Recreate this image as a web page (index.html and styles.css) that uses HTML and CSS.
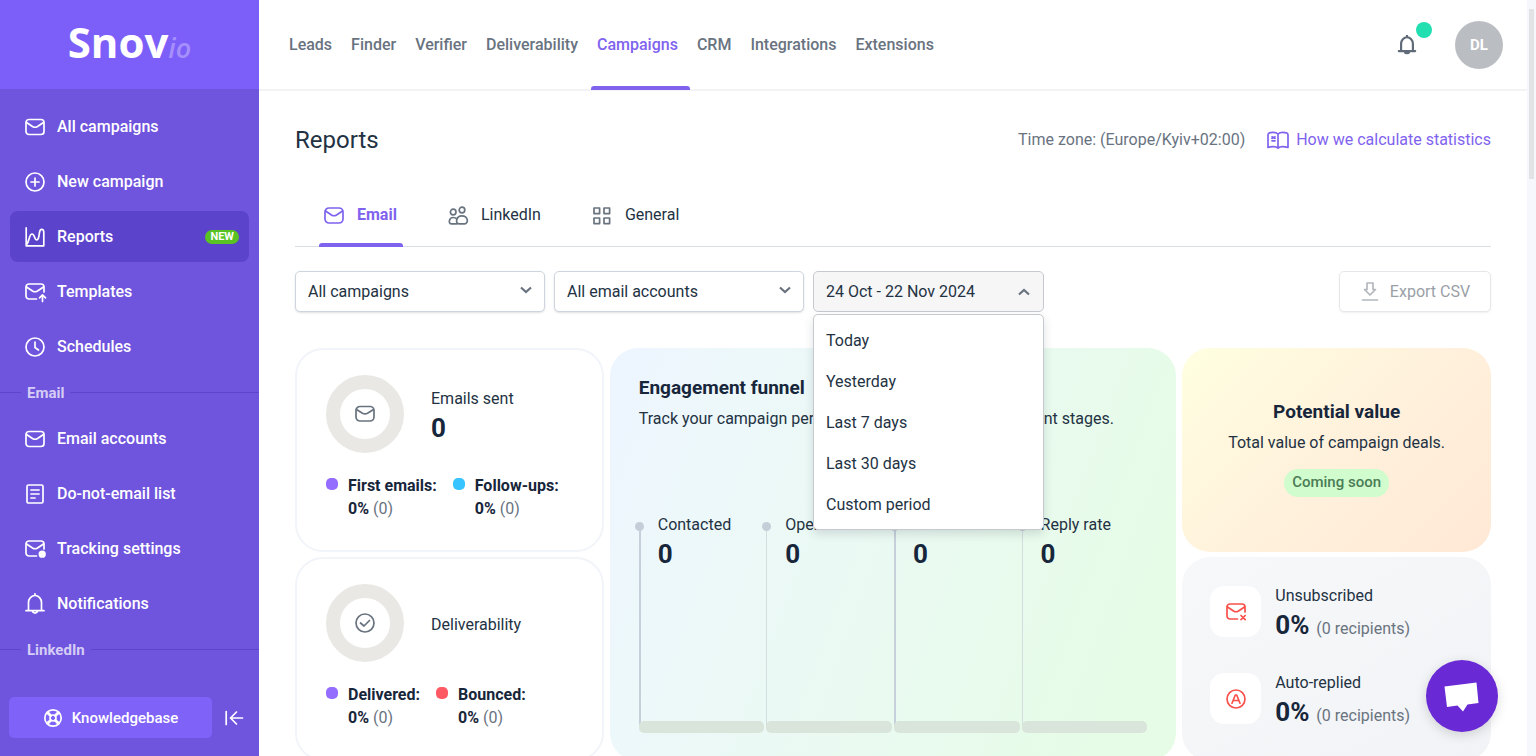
FILE: index.html
```
<!DOCTYPE html>
<html lang="en">
  <head>
    <meta charset="UTF-8" />
    <meta name="viewport" content="width=device-width, initial-scale=1.0" />
    <title>Reports</title>
    <link rel="stylesheet" href="styles.css">
  </head>
  <body>
    <!-- Shared icons -->
    <svg class="icon-defs" aria-hidden="true">
      <symbol id="icon-mail" viewBox="0 0 20 20">
        <rect x="1" y="2.5" width="18" height="15" rx="3" />
        <path d="M1.5 5.5 L7.5 9.5 Q10 11 12.5 9.5 L18.5 5.5" />
      </symbol>
      <symbol id="icon-mail-cut" viewBox="0 0 20 20">
        <path d="M11.5 17 H4 A3 3 0 0 1 1 14 V5 A3 3 0 0 1 4 2 H16 A3 3 0 0 1 19 5 V10" />
        <path d="M1.5 5 L7.5 9 Q10 10.5 12.5 9 L18.5 5" />
      </symbol>
      <symbol id="icon-bell" viewBox="0 0 20 22">
        <path d="M3.5 17.5 V9.5 A6.5 7 0 0 1 16.5 9.5 V17.5 M1 17.7 H19 M7.3 18 A2.8 2.8 0 0 0 12.7 18 M10 0.8 V2.5" />
      </symbol>
    </svg>

    <div class="app">
      <aside class="sidebar">
        <a class="logo" href="#">Snov<span>io</span></a>

        <nav class="side-nav">
          <ul>
            <li><a href="#"><svg class="icon"><use href="#icon-mail" /></svg>All campaigns</a></li>
            <li><a href="#"><svg class="icon" viewBox="0 0 20 20"><circle cx="10" cy="10" r="9" /><path d="M10 6 V14 M6 10 H14" /></svg>New campaign</a></li>
            <li>
              <a class="active" href="#"><svg class="icon" viewBox="0 0 20 20"><path d="M1.2 0.8 V18.8 H18.8 V5.5 C18.8 1.2 15 1.2 14.5 5.5 C13.8 11 13.3 13 11.5 13 C9.5 13 9.8 7 7 7 C4 7 4.5 15 1.4 17.8" /></svg>Reports <span class="badge-new">NEW</span></a>
            </li>
            <li><a href="#"><svg class="icon" viewBox="0 0 20 20"><use href="#icon-mail-cut" /><path d="M17.5 19.5 V13 M14.5 15.8 L17.5 12.8 L20.5 15.8" /></svg>Templates</a></li>
            <li><a href="#"><svg class="icon" viewBox="0 0 20 20"><circle cx="10" cy="10" r="9" /><path d="M10 5 V10.5 L13.5 13" /></svg>Schedules</a></li>
          </ul>
          <h2 class="side-label">Email</h2>
          <ul>
            <li><a href="#"><svg class="icon"><use href="#icon-mail" /></svg>Email accounts</a></li>
            <li><a href="#"><svg class="icon" viewBox="0 0 20 20"><rect x="2" y="1" width="16" height="18" rx="1.5" /><path d="M6 6 H14 M6 10 H14 M6 14 H10" /></svg>Do-not-email list</a></li>
            <li><a href="#"><svg class="icon" viewBox="0 0 20 20"><use href="#icon-mail-cut" /><circle class="solid" cx="17.2" cy="15.2" r="2.8" /></svg>Tracking settings</a></li>
            <li><a href="#"><svg class="icon icon-tall"><use href="#icon-bell" /></svg>Notifications</a></li>
          </ul>
          <h2 class="side-label">LinkedIn</h2>
        </nav>

        <div class="side-footer">
          <a class="knowledge" href="#">
            <svg class="icon" viewBox="0 0 20 20"><circle cx="10" cy="10" r="8.2" /><circle cx="10" cy="10" r="3" /><path d="M4 5 L7.8 8.3 M5 4 L8.3 7.5 M16 5 L12.2 8.3 M15 4 L11.7 7.5 M4 15 L7.8 11.7 M5 16 L8.3 12.5 M16 15 L12.2 11.7 M15 16 L11.7 12.5" /></svg>
            Knowledgebase
          </a>
          <button class="collapse" aria-label="Collapse menu">
            <svg class="icon" viewBox="0 0 20 20"><path d="M2.2 3.5 V16.5 M18.5 10 H6.5 M12.5 4 L6.5 10 L12.5 16" /></svg>
          </button>
        </div>
      </aside>

      <div class="main">
        <header class="topbar">
          <nav class="top-nav">
            <a href="#">Leads</a>
            <a href="#">Finder</a>
            <a href="#">Verifier</a>
            <a href="#">Deliverability</a>
            <a class="active" href="#">Campaigns</a>
            <a href="#">CRM</a>
            <a href="#">Integrations</a>
            <a href="#">Extensions</a>
          </nav>
          <div class="top-tools">
            <button class="bell" aria-label="Notifications">
              <svg class="icon"><use href="#icon-bell" /></svg>
              <span class="bell-dot"></span>
            </button>
            <button class="avatar">DL</button>
          </div>
        </header>

        <main class="content">
          <div class="page-head">
            <h1>Reports</h1>
            <p>Time zone: (Europe/Kyiv+02:00)</p>
            <a href="#">
              <svg class="icon" viewBox="0 0 20 20"><path d="M10 4 C8 2 5 2 1.5 2.8 Q0 3.2 0 5 V17.5 C4 16.3 8 16.3 10 18 C12 16.3 16 16.3 20 17.5 V5 Q20 3.2 18.5 2.8 C15 2 12 2 10 4 V18 M4 6.8 L7 8.4 M7 6.8 L4 8.4 M4 10.8 H7" /></svg>
              How we calculate statistics
            </a>
          </div>

          <nav class="tabs">
            <a class="active" href="#"><svg class="icon" viewBox="0 0 20 20"><rect x="1" y="3" width="18" height="15" rx="4" /><path d="M1.5 6 L7.5 10 Q10 11.5 12.5 10 L18.5 6" /></svg>Email</a>
            <a href="#"><svg class="icon" viewBox="0 0 20 20"><circle cx="5.2" cy="7" r="2.8" /><circle cx="14" cy="5" r="2.8" /><path d="M9 18.8 H3 C0.5 18.8 0.5 12.5 5.3 12.5 Q7.5 12.5 8.8 14 M11 18.8 C7 18.8 8 10.8 13.8 10.8 C20.5 10.8 20.8 18.8 16.5 18.8 Z" /></svg>LinkedIn</a>
            <a href="#"><svg class="icon" viewBox="0 0 20 20"><rect x="2" y="3" width="5.6" height="5.6" /><rect x="12" y="3" width="5.6" height="5.6" /><rect x="2" y="13" width="5.6" height="5.6" /><rect x="12" y="13" width="5.6" height="5.6" /></svg>General</a>
          </nav>

          <div class="filters">
            <div class="select-box">
              <select aria-label="Campaigns">
                <option>All campaigns</option>
              </select>
              <svg class="chevron" viewBox="0 0 12 8"><path d="M1 1.5 L6 6 L11 1.5" /></svg>
            </div>
            <div class="select-box">
              <select aria-label="Email accounts">
                <option>All email accounts</option>
              </select>
              <svg class="chevron" viewBox="0 0 12 8"><path d="M1 1.5 L6 6 L11 1.5" /></svg>
            </div>
            <div class="period">
              <button class="period-toggle" aria-expanded="true">
                24 Oct - 22 Nov 2024
                <svg class="chevron" viewBox="0 0 12 8"><path d="M1 6.5 L6 2 L11 6.5" /></svg>
              </button>
              <div class="period-menu">
                <button>Today</button>
                <button>Yesterday</button>
                <button>Last 7 days</button>
                <button>Last 30 days</button>
                <button>Custom period</button>
              </div>
            </div>
            <button class="export" disabled>
              <svg class="icon" viewBox="0 0 20 20"><path d="M7 1 H13 V7.5 H15.5 L10 13 L4.5 7.5 H7 Z M2.5 18 H17.5" /></svg>
              Export CSV
            </button>
          </div>

          <div class="cards">
            <section class="card metric">
              <div class="metric-top">
                <div class="ring"><svg class="icon" viewBox="0 0 20 20"><rect x="1" y="2.5" width="18" height="14.5" rx="4" /><path d="M1.5 5.5 L7.5 9.2 Q10 10.5 12.5 9.2 L18.5 5.5" /></svg></div>
                <div>
                  <h3>Emails sent</h3>
                  <p class="value">0</p>
                </div>
              </div>
              <ul class="legend">
                <li class="violet"><b>First emails:</b><br><b>0%</b> (0)</li>
                <li class="blue"><b>Follow-ups:</b><br><b>0%</b> (0)</li>
              </ul>
            </section>

            <section class="card funnel">
              <h2>Engagement funnel</h2>
              <p>Track your campaign performance at different engagement stages.</p>
              <div class="stages">
                <div class="stage"><h3>Contacted</h3><p class="value">0</p></div>
                <div class="stage"><h3>Open rate</h3><p class="value">0</p></div>
                <div class="stage"><h3>Click rate</h3><p class="value">0</p></div>
                <div class="stage"><h3>Reply rate</h3><p class="value">0</p></div>
              </div>
            </section>

            <section class="card potential">
              <h2>Potential value</h2>
              <p>Total value of campaign deals.</p>
              <span class="soon">Coming soon</span>
            </section>

            <section class="card metric">
              <div class="metric-top">
                <div class="ring"><svg class="icon" viewBox="0 0 20 20"><circle cx="10" cy="10" r="9" /><path d="M5.5 10 L9 13 L14.5 7.5" /></svg></div>
                <h3>Deliverability</h3>
              </div>
              <ul class="legend">
                <li class="violet"><b>Delivered:</b><br><b>0%</b> (0)</li>
                <li class="red"><b>Bounced:</b><br><b>0%</b> (0)</li>
              </ul>
            </section>

            <section class="card replies">
              <div class="reply">
                <div class="tile"><svg class="icon" viewBox="0 0 20 20"><use href="#icon-mail-cut" /><path d="M15 13.5 L19.2 17.7 M19.2 13.5 L15 17.7" /></svg></div>
                <div>
                  <h3>Unsubscribed</h3>
                  <p><span class="value">0%</span> (0 recipients)</p>
                </div>
              </div>
              <div class="reply">
                <div class="tile"><svg class="icon" viewBox="0 0 20 20"><circle cx="10" cy="10" r="9" /><path d="M6 14.2 L9.3 6 H10.7 L14 14.2 M7.3 11.5 H12.7" /></svg></div>
                <div>
                  <h3>Auto-replied</h3>
                  <p><span class="value">0%</span> (0 recipients)</p>
                </div>
              </div>
            </section>
          </div>
        </main>
      </div>

      <div class="scroll-track"><div class="scroll-thumb"></div></div>
    </div>

    <button class="chat" aria-label="Open chat">
      <svg viewBox="0 0 72 72"><path d="M18.5 26.5 L50.5 22.5 L52.5 43 L41.5 44.5 L37 51.5 L31.5 45.5 L21 47 Z" /></svg>
    </button>
  </body>
</html>
```
FILE: styles.css
```
* {
  box-sizing: border-box;
}
body {
  margin: 0;
  font-family: Roboto, sans-serif;
  font-size: 16px;
  line-height: 24px;
  color: #233243;
  overflow: hidden;
}
h1,
h2,
h3,
p,
ul {
  margin: 0;
  padding: 0;
  font-weight: 400;
  font-size: 16px;
}
ul {
  list-style: none;
}
a {
  color: inherit;
  text-decoration: none;
}
button,
select {
  font: inherit;
  color: inherit;
  border: none;
  background: none;
  padding: 0;
  cursor: pointer;
}

.icon-defs {
  display: none;
}
.icon {
  width: 20px;
  height: 20px;
  flex: none;
  overflow: visible;
  fill: none;
  stroke: currentColor;
  stroke-width: 1.7;
  stroke-linecap: round;
  stroke-linejoin: round;
}
.icon-tall {
  height: 22px;
}
.solid {
  fill: currentColor;
}

.app {
  display: flex;
  height: 100vh;
  overflow: hidden;
}

/* Sidebar */
.sidebar {
  width: 259px;
  flex: none;
  display: flex;
  flex-direction: column;
  background: #6f54dd;
  color: #fff;
}
.logo {
  height: 89px;
  flex: none;
  background: #7c5ff9;
  font-family: "Open Sans", sans-serif;
  font-size: 42px;
  font-weight: 700;
  line-height: 84px;
  text-align: center;
}
.logo span {
  font-size: 27px;
  font-style: italic;
  font-weight: 600;
  color: #a68ffb;
}
.side-nav {
  flex: 1;
  min-height: 0;
  overflow: hidden;
  padding-top: 12px;
}
.side-nav ul {
  display: flex;
  flex-direction: column;
  gap: 4px;
  padding: 0 10px;
}
.side-nav a {
  display: flex;
  align-items: center;
  gap: 12px;
  height: 51px;
  padding: 0 10px 0 15px;
  border-radius: 8px;
  font-weight: 500;
}
.side-nav a.active {
  background: #5b43cb;
}
.badge-new {
  margin-left: auto;
  padding: 0 5px;
  border-radius: 8px;
  background: #58c322;
  font-size: 11px;
  font-weight: 700;
  line-height: 14px;
}
.side-label {
  display: flex;
  align-items: center;
  gap: 6px;
  height: 41px;
  color: #d5cdf5;
  font-size: 15px;
  font-weight: 700;
}
.side-label::before,
.side-label::after {
  content: "";
  width: 21px;
  height: 1px;
  background: #5d44ce;
}
.side-label::after {
  flex: 1;
}
.side-footer {
  display: flex;
  align-items: center;
  gap: 12px;
  padding: 0 9px 18px;
}
.knowledge {
  flex: 1;
  display: flex;
  align-items: center;
  justify-content: center;
  gap: 9px;
  height: 41px;
  border-radius: 5px;
  background: #7f62f8;
  font-size: 15px;
  font-weight: 500;
}
.collapse {
  display: flex;
  padding: 0 6px 0 0;
}

/* Top bar */
.main {
  flex: 1;
  min-width: 0;
}
.topbar {
  display: flex;
  justify-content: space-between;
  height: 91px;
  padding: 0 24px;
  border-bottom: 2px solid #f3f3f5;
}
.top-nav {
  display: flex;
  gap: 1px;
  color: #69737f;
  font-weight: 500;
}
.top-nav a {
  position: relative;
  height: 90px;
  padding: 33px 12px 0 6px;
}
.top-nav a.active {
  color: #7f63ee;
}
.top-nav a.active::after,
.tabs a.active::after {
  content: "";
  position: absolute;
  left: 0;
  right: 0;
  bottom: 0;
  height: 4px;
  border-radius: 3px 3px 0 0;
  background: #7f63ee;
}
.top-tools {
  display: flex;
  align-items: center;
  gap: 38px;
}
.bell {
  position: relative;
  display: flex;
  color: #5f6b78;
}
.bell .icon {
  stroke-width: 2.4;
}
.bell-dot {
  position: absolute;
  top: -13px;
  right: -15px;
  width: 16px;
  height: 16px;
  border-radius: 50%;
  background: #22dfb2;
}
.avatar {
  width: 48px;
  height: 48px;
  border-radius: 50%;
  background: #babdc2;
  color: #fff;
  font-size: 15px;
  font-weight: 700;
}

/* Page */
.content {
  padding: 33px 36px;
}
.page-head {
  display: flex;
  align-items: center;
  height: 32px;
  color: #69737f;
}
.page-head h1 {
  flex: 1;
  color: #233243;
  font-size: 24px;
}
.page-head a {
  display: flex;
  align-items: center;
  gap: 8px;
  margin-left: 23px;
  color: #7f63ee;
}
.tabs {
  display: flex;
  gap: 40px;
  margin-top: 34px;
  padding: 0 24px;
  box-shadow: inset 0 -1px #d9dfe6;
}
.tabs a {
  position: relative;
  display: flex;
  align-items: center;
  gap: 13px;
  padding: 13px 6px 20px 5px;
}
.tabs .icon {
  color: #69737f;
}
.tabs a.active,
.tabs .active .icon {
  color: #7f63ee;
}
.tabs a.active {
  font-weight: 700;
}

/* Filters */
.filters {
  display: flex;
  gap: 9px;
  margin-top: 24px;
}
.select-box {
  position: relative;
  width: 250px;
}
.select-box select {
  width: 100%;
  height: 41px;
  padding: 0 12px;
  appearance: none;
  border: 1px solid #cfd5de;
  border-radius: 5px;
  background: #fff;
  box-shadow: 0 1px 2px rgba(40, 50, 70, 0.15);
}
.chevron {
  width: 12px;
  height: 8px;
  overflow: visible;
  fill: none;
  stroke: #69737f;
  stroke-width: 2.2;
}
.select-box .chevron {
  position: absolute;
  top: 15px;
  right: 13px;
  pointer-events: none;
}
.period {
  position: relative;
  width: 231px;
}
.period-toggle {
  display: flex;
  align-items: center;
  justify-content: space-between;
  width: 100%;
  height: 41px;
  padding: 0 13px 0 12px;
  border: 1px solid #c6c9ce;
  border-radius: 5px;
  background: #f6f6f7;
}
.period-menu {
  position: absolute;
  top: 43px;
  left: 0;
  right: 0;
  z-index: 1;
  display: flex;
  flex-direction: column;
  padding: 5px 0 4px;
  border: 1px solid #c6c9ce;
  border-radius: 5px;
  background: #fff;
  box-shadow: 0 4px 10px rgba(40, 50, 70, 0.15);
}
.period-menu button {
  height: 41px;
  padding: 0 12px;
  text-align: left;
}
.period-menu button:hover {
  background: #f6f6f7;
}
.export {
  display: flex;
  align-items: center;
  justify-content: center;
  gap: 10px;
  width: 152px;
  height: 41px;
  margin-left: auto;
  border: 1px solid #e5e7ea;
  border-radius: 5px;
  box-shadow: 0 1px 2px rgba(40, 50, 70, 0.08);
  color: #9a9fa7;
}
.export .icon {
  color: #b3b7bd;
}

/* Cards */
.cards {
  display: grid;
  grid-template-columns: 309fr 567fr 309fr;
  grid-auto-rows: 204px;
  gap: 5px 6px;
  margin-top: 36px;
}
.card {
  border-radius: 28px;
}
.card h2 {
  color: #17263a;
  font-size: 19px;
  font-weight: 700;
}
.value {
  color: #17263a;
  font-size: 26px;
  font-weight: 700;
  line-height: 34px;
}
.metric {
  padding: 25px 29px;
  border: 2px solid #f1f4f9;
}
.metric-top {
  display: flex;
  align-items: center;
  gap: 27px;
}
.metric-top h3 {
  padding-top: 4px;
}
.ring {
  display: flex;
  align-items: center;
  justify-content: center;
  width: 78px;
  height: 78px;
  border: 14px solid #e9e8e4;
  border-radius: 50%;
  color: #69737f;
}
.legend {
  display: flex;
  gap: 16px;
  margin-top: 21px;
  color: #69737f;
  line-height: 23px;
}
.legend li {
  position: relative;
  padding-left: 22px;
}
.legend b {
  color: #17263a;
  font-weight: 700;
}
.legend li::before {
  content: "";
  position: absolute;
  top: 4px;
  left: 0;
  width: 12px;
  height: 12px;
  border-radius: 5px;
}
.violet::before {
  background: #946dff;
}
.blue::before {
  background: #37c4ff;
}
.red::before {
  background: #ff5964;
}

.funnel {
  grid-row: span 2;
  display: flex;
  flex-direction: column;
  padding: 28px 29px;
  background: linear-gradient(110deg, #edf5ff 0%, #edf8fa 20%, #e9faef 60%, #e6fce6 90%);
}
.funnel > p {
  margin-top: 7px;
}
.stages {
  flex: 1;
  display: grid;
  grid-template-columns: repeat(4, 1fr);
  gap: 2px;
  margin-top: 82px;
}
.stage {
  position: relative;
  padding-left: 19px;
  background: linear-gradient(#d3dde0, #d3dde0) 0 14px / 1px calc(100% - 18px) no-repeat;
}
.stage:nth-child(odd) {
  background-image: linear-gradient(#c5d0db, #c5d0db);
  background-size: 2px calc(100% - 18px);
}
/* Dot at the top of the line and the track at its bottom */
.stage::before {
  content: "";
  position: absolute;
  top: 9px;
  left: -4px;
  width: 9px;
  height: 9px;
  border-radius: 50%;
  background: #c5cdd9;
}
.stage::after {
  content: "";
  position: absolute;
  bottom: 0;
  left: 0;
  right: 0;
  height: 12px;
  border-radius: 5px;
  background: #d9e5db;
}

.potential {
  display: flex;
  flex-direction: column;
  align-items: center;
  justify-content: center;
  padding-bottom: 3px;
  background: linear-gradient(135deg, #ffffe0, #fff1dc 50%, #ffe8d6);
}
.potential p {
  margin-top: 7px;
}
.soon {
  margin-top: 14px;
  padding: 0 8px 2px;
  border-radius: 14px;
  background: #d1fccd;
  color: #4b7d56;
  font-size: 15px;
  font-weight: 500;
  line-height: 26px;
}

.replies {
  display: flex;
  flex-direction: column;
  gap: 29px;
  padding: 27px 28px;
  background: linear-gradient(150deg, #f7f8fa, #f2f3f6);
}
.reply {
  display: flex;
  gap: 14px;
  color: #69737f;
}
.reply h3 {
  color: #233243;
}
.reply .value {
  margin-right: 3px;
}
.tile {
  display: flex;
  align-items: center;
  justify-content: center;
  width: 51px;
  height: 51px;
  margin-top: 2px;
  border-radius: 14px;
  background: #fff;
  color: #f8514b;
}

/* Scrollbar strip on the right */
.scroll-track {
  width: 9px;
  flex: none;
  padding: 9px 2px;
  background: #f6f7fd;
}
.scroll-thumb {
  height: 170px;
  background: #e3e3e5;
}

.chat {
  position: fixed;
  right: 38px;
  bottom: 24px;
  z-index: 2;
  width: 72px;
  height: 72px;
  border-radius: 50%;
  background: #692ad5;
  box-shadow: 0 3px 12px rgba(0, 0, 0, 0.15);
}
.chat svg {
  display: block;
  fill: #fff;
}
```
